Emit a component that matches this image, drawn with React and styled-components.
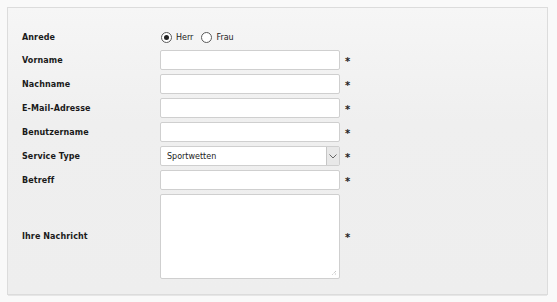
import styled, { createGlobalStyle } from 'styled-components';

const GlobalStyle = createGlobalStyle`
  html, body {
    margin: 0;
    background: #f9f9f9;
    font-family: Tahoma, "DejaVu Sans", Verdana, sans-serif;
    color: #1e1e1e;
  }
`;

const Page = styled.div`
  padding: 7px;
`;

const Panel = styled.form`
  width: 541px;
  box-sizing: border-box;
  height: 288px;
  border: 1px solid #dcdcdc;
  background: linear-gradient(#f6f6f6, #efefef 40%, #eeeeee);
  box-shadow: 0 2px 0 -1px #e6e6e6;
  padding: 20px 14px 14px;
`;

const Grid = styled.div`
  display: grid;
  grid-template-columns: 138px 180px auto;
  row-gap: 4px;
  align-items: center;
`;

const Label = styled.label`
  font-family: "DejaVu Sans", Verdana, sans-serif;
  font-weight: bold;
  font-size: 8px;
  letter-spacing: 0.1px;
  color: #1a1a1a;
`;

const RadioGroup = styled.div`
  display: flex;
  align-items: center;
  height: 18px;
  font-family: "DejaVu Sans", Verdana, sans-serif;
  font-size: 8px;
  color: #222;
`;

const RadioItem = styled.label`
  display: flex;
  align-items: center;
  margin-right: 7px;
`;

const RadioCircle = styled.span`
  width: 9px;
  height: 9px;
  border-radius: 50%;
  border: 1px solid #5a5a5a;
  background: #fff;
  display: flex;
  align-items: center;
  justify-content: center;
  margin-right: 4px;
  margin-left: 1px;
  &::after {
    content: '';
    width: 5px;
    height: 5px;
    border-radius: 50%;
    background: ${p => (p.checked ? '#222' : 'transparent')};
  }
`;

const Field = styled.input`
  box-sizing: border-box;
  width: 180px;
  height: 20px;
  border: 1px solid #cfcfcf;
  border-radius: 2px;
  background: #fff;
  margin: 0;
  padding: 0 6px;
`;

const SelectBox = styled.div`
  box-sizing: border-box;
  width: 180px;
  height: 20px;
  border: 1px solid #cfcfcf;
  border-radius: 2px;
  background: #fff;
  display: flex;
  align-items: center;
  font-family: "DejaVu Sans", Verdana, sans-serif;
  font-size: 8px;
  color: #222;
`;

const SelectText = styled.span`
  flex: 1;
  padding-left: 6px;
`;

const SelectArrow = styled.span`
  width: 12px;
  height: 18px;
  border-left: 1px solid #c6c6c6;
  background: #e8e8e8;
  display: flex;
  align-items: center;
  justify-content: center;
`;

const TextArea = styled.div`
  position: relative;
  box-sizing: border-box;
  width: 180px;
  height: 85px;
  border: 1px solid #cfcfcf;
  border-radius: 2px;
  background: #fff;
`;

const Grip = styled.svg`
  position: absolute;
  right: 2px;
  bottom: 2px;
`;

const Star = styled.span`
  font-family: "DejaVu Sans", Verdana, sans-serif;
  font-weight: bold;
  font-size: 10px;
  padding-left: 5px;
  color: #222;
  line-height: 1;
  padding-top: 3px;
`;

const fields = ['Vorname', 'Nachname', 'E-Mail-Adresse', 'Benutzername'];

export default function App() {
  return (
    <Page>
      <GlobalStyle />
      <Panel>
        <Grid>
          <Label>Anrede</Label>
          <RadioGroup>
            <RadioItem>
              <RadioCircle checked />
              Herr
            </RadioItem>
            <RadioItem>
              <RadioCircle />
              Frau
            </RadioItem>
          </RadioGroup>
          <span />
          {fields.map(f => (
            <Row key={f} label={f}>
              <Field />
            </Row>
          ))}
          <Row label='Service Type'>
            <SelectBox>
              <SelectText>Sportwetten</SelectText>
              <SelectArrow>
                <svg width='8' height='5' viewBox='0 0 8 5'>
                  <path d='M0.5 0.5 L4 4 L7.5 0.5' fill='none' stroke='#666' strokeWidth='1' />
                </svg>
              </SelectArrow>
            </SelectBox>
          </Row>
          <Row label='Betreff'>
            <Field />
          </Row>
          <Row label='Ihre Nachricht'>
            <TextArea>
              <Grip width='6' height='6' viewBox='0 0 6 6'>
                <path d='M5 1 L1 5 M5 3.5 L3.5 5' stroke='#999' strokeWidth='0.8' strokeDasharray='1 1' />
              </Grip>
            </TextArea>
          </Row>
        </Grid>
      </Panel>
    </Page>
  );
}

function Row({ label, children }) {
  return (
    <>
      <Label>{label}</Label>
      {children}
      <Star>*</Star>
    </>
  );
}
